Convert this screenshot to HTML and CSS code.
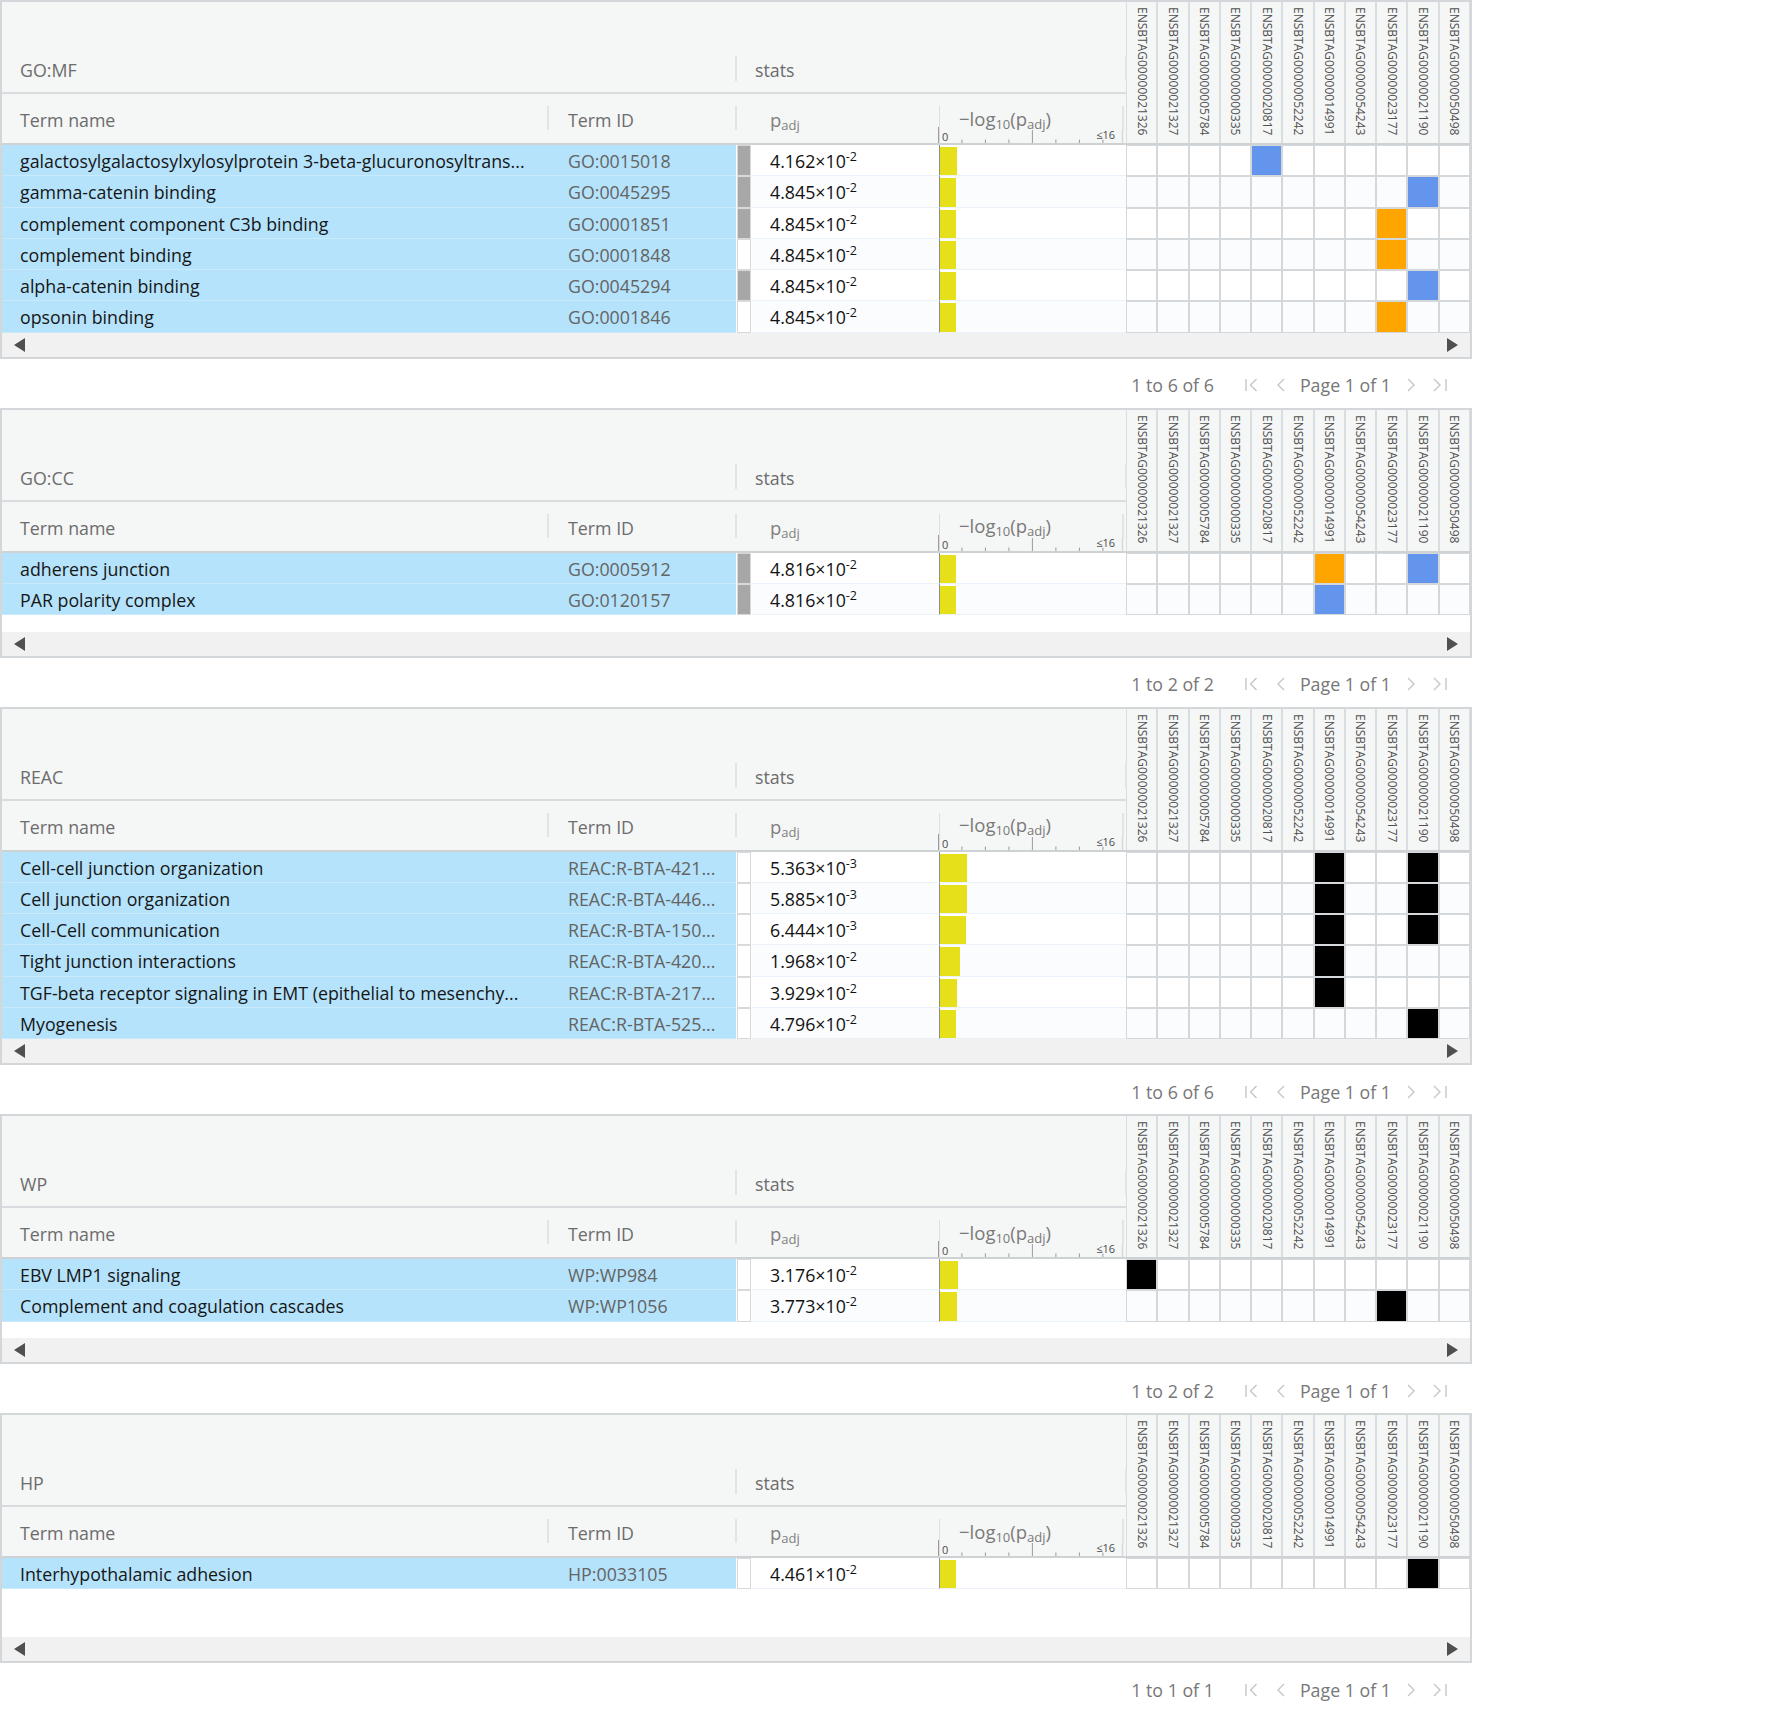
FILE: index.html
```html
<!DOCTYPE html>
<html lang="en">
<head>
<meta charset="utf-8">
<title>g:Profiler results</title>
<link rel="stylesheet" href="styles.css">
</head>
<body>
<div class="page">

<!-- ===================== GO:MF ===================== -->
<section class="block">
  <div class="grid">
    <div class="head">
      <div class="head-left">
        <div class="group-row">
          <div class="grp grp-src">GO:MF</div>
          <div class="grp grp-stats">stats</div>
        </div>
        <div class="col-row">
          <div class="hc hc-name">Term name</div>
          <div class="hc hc-id">Term ID</div>
          <div class="hc hc-blank"></div>
          <div class="hc hc-padj"><span>p<sub>adj</sub></span></div>
          <div class="hc hc-bar"><span>&minus;log<sub>10</sub>(p<sub>adj</sub>)</span>
            <svg class="axis" width="188" height="16" viewBox="0 0 188 16"><path d="M0.5 0V16M23.9 12.5V16M47.4 12.5V16M70.9 12.5V16M94.4 3V16M117.9 12.5V16M141.4 12.5V16M164.9 12.5V16" stroke="#9b9b9b" stroke-width="1"/><path d="M184.5 3V16" stroke="#d6d8da" stroke-width="1.5"/><text x="4" y="14" class="axis-t">0</text><text x="177" y="12" text-anchor="end" class="axis-t">&le;16</text></svg>
          </div>
        </div>
      </div>
      <div class="gene-heads">
        <div class="gh"><span>ENSBTAG00000021326</span></div>
        <div class="gh"><span>ENSBTAG00000021327</span></div>
        <div class="gh"><span>ENSBTAG00000005784</span></div>
        <div class="gh"><span>ENSBTAG00000000335</span></div>
        <div class="gh"><span>ENSBTAG00000020817</span></div>
        <div class="gh"><span>ENSBTAG00000052242</span></div>
        <div class="gh"><span>ENSBTAG00000014991</span></div>
        <div class="gh"><span>ENSBTAG00000054243</span></div>
        <div class="gh"><span>ENSBTAG00000023177</span></div>
        <div class="gh"><span>ENSBTAG00000021190</span></div>
        <div class="gh"><span>ENSBTAG00000050498</span></div>
      </div>
    </div>
    <div class="body">
      <div class="row">
        <div class="c-name">galactosylgalactosylxylosylprotein 3-beta-glucuronosyltrans...</div>
        <div class="c-id">GO:0015018</div>
        <div class="c-src"><span class="src on"></span></div>
        <div class="c-padj">4.162×10<sup>-2</sup></div>
        <div class="c-bar"><span class="bar" style="width:16.6px"></span></div>
        <div class="genes"><span></span><span></span><span></span><span></span><span class="b"></span><span></span><span></span><span></span><span></span><span></span><span></span></div>
      </div>
      <div class="row">
        <div class="c-name">gamma-catenin binding</div>
        <div class="c-id">GO:0045295</div>
        <div class="c-src"><span class="src on"></span></div>
        <div class="c-padj">4.845×10<sup>-2</sup></div>
        <div class="c-bar"><span class="bar" style="width:15.9px"></span></div>
        <div class="genes"><span></span><span></span><span></span><span></span><span></span><span></span><span></span><span></span><span></span><span class="b"></span><span></span></div>
      </div>
      <div class="row">
        <div class="c-name">complement component C3b binding</div>
        <div class="c-id">GO:0001851</div>
        <div class="c-src"><span class="src on"></span></div>
        <div class="c-padj">4.845×10<sup>-2</sup></div>
        <div class="c-bar"><span class="bar" style="width:15.9px"></span></div>
        <div class="genes"><span></span><span></span><span></span><span></span><span></span><span></span><span></span><span></span><span class="o"></span><span></span><span></span></div>
      </div>
      <div class="row">
        <div class="c-name">complement binding</div>
        <div class="c-id">GO:0001848</div>
        <div class="c-src"><span class="src"></span></div>
        <div class="c-padj">4.845×10<sup>-2</sup></div>
        <div class="c-bar"><span class="bar" style="width:15.9px"></span></div>
        <div class="genes"><span></span><span></span><span></span><span></span><span></span><span></span><span></span><span></span><span class="o"></span><span></span><span></span></div>
      </div>
      <div class="row">
        <div class="c-name">alpha-catenin binding</div>
        <div class="c-id">GO:0045294</div>
        <div class="c-src"><span class="src on"></span></div>
        <div class="c-padj">4.845×10<sup>-2</sup></div>
        <div class="c-bar"><span class="bar" style="width:15.9px"></span></div>
        <div class="genes"><span></span><span></span><span></span><span></span><span></span><span></span><span></span><span></span><span></span><span class="b"></span><span></span></div>
      </div>
      <div class="row">
        <div class="c-name">opsonin binding</div>
        <div class="c-id">GO:0001846</div>
        <div class="c-src"><span class="src"></span></div>
        <div class="c-padj">4.845×10<sup>-2</sup></div>
        <div class="c-bar"><span class="bar" style="width:15.9px"></span></div>
        <div class="genes"><span></span><span></span><span></span><span></span><span></span><span></span><span></span><span></span><span class="o"></span><span></span><span></span></div>
      </div>
    </div>
    <div class="hscroll"><span class="arr-l"></span><span class="arr-r"></span></div>
  </div>
  <div class="pager">
    <span class="count">1 to 6 of 6</span>
    <svg class="ic ic-first" width="13" height="14" viewBox="0 0 13 14"><path d="M1 1V13M11.5 1L5.5 7L11.5 13" fill="none" stroke="#c6c6c6" stroke-width="1.4"/></svg>
    <svg class="ic ic-prev" width="8" height="14" viewBox="0 0 8 14"><path d="M7 1L1 7L7 13" fill="none" stroke="#c6c6c6" stroke-width="1.4"/></svg>
    <span class="pages">Page 1 of 1</span>
    <svg class="ic ic-next" width="8" height="14" viewBox="0 0 8 14"><path d="M1 1L7 7L1 13" fill="none" stroke="#c6c6c6" stroke-width="1.4"/></svg>
    <svg class="ic ic-last" width="14" height="14" viewBox="0 0 14 14"><path d="M1 1L7 7L1 13M13 1V13" fill="none" stroke="#c6c6c6" stroke-width="1.4"/></svg>
  </div>
</section>

<!-- ===================== GO:CC ===================== -->
<section class="block">
  <div class="grid">
    <div class="head">
      <div class="head-left">
        <div class="group-row">
          <div class="grp grp-src">GO:CC</div>
          <div class="grp grp-stats">stats</div>
        </div>
        <div class="col-row">
          <div class="hc hc-name">Term name</div>
          <div class="hc hc-id">Term ID</div>
          <div class="hc hc-blank"></div>
          <div class="hc hc-padj"><span>p<sub>adj</sub></span></div>
          <div class="hc hc-bar"><span>&minus;log<sub>10</sub>(p<sub>adj</sub>)</span>
            <svg class="axis" width="188" height="16" viewBox="0 0 188 16"><path d="M0.5 0V16M23.9 12.5V16M47.4 12.5V16M70.9 12.5V16M94.4 3V16M117.9 12.5V16M141.4 12.5V16M164.9 12.5V16" stroke="#9b9b9b" stroke-width="1"/><path d="M184.5 3V16" stroke="#d6d8da" stroke-width="1.5"/><text x="4" y="14" class="axis-t">0</text><text x="177" y="12" text-anchor="end" class="axis-t">&le;16</text></svg>
          </div>
        </div>
      </div>
      <div class="gene-heads">
        <div class="gh"><span>ENSBTAG00000021326</span></div>
        <div class="gh"><span>ENSBTAG00000021327</span></div>
        <div class="gh"><span>ENSBTAG00000005784</span></div>
        <div class="gh"><span>ENSBTAG00000000335</span></div>
        <div class="gh"><span>ENSBTAG00000020817</span></div>
        <div class="gh"><span>ENSBTAG00000052242</span></div>
        <div class="gh"><span>ENSBTAG00000014991</span></div>
        <div class="gh"><span>ENSBTAG00000054243</span></div>
        <div class="gh"><span>ENSBTAG00000023177</span></div>
        <div class="gh"><span>ENSBTAG00000021190</span></div>
        <div class="gh"><span>ENSBTAG00000050498</span></div>
      </div>
    </div>
    <div class="body">
      <div class="row">
        <div class="c-name">adherens junction</div>
        <div class="c-id">GO:0005912</div>
        <div class="c-src"><span class="src on"></span></div>
        <div class="c-padj">4.816×10<sup>-2</sup></div>
        <div class="c-bar"><span class="bar" style="width:15.9px"></span></div>
        <div class="genes"><span></span><span></span><span></span><span></span><span></span><span></span><span class="o"></span><span></span><span></span><span class="b"></span><span></span></div>
      </div>
      <div class="row">
        <div class="c-name">PAR polarity complex</div>
        <div class="c-id">GO:0120157</div>
        <div class="c-src"><span class="src on"></span></div>
        <div class="c-padj">4.816×10<sup>-2</sup></div>
        <div class="c-bar"><span class="bar" style="width:15.9px"></span></div>
        <div class="genes"><span></span><span></span><span></span><span></span><span></span><span></span><span class="b"></span><span></span><span></span><span></span><span></span></div>
      </div>
    </div>
    <div class="hscroll"><span class="arr-l"></span><span class="arr-r"></span></div>
  </div>
  <div class="pager">
    <span class="count">1 to 2 of 2</span>
    <svg class="ic ic-first" width="13" height="14" viewBox="0 0 13 14"><path d="M1 1V13M11.5 1L5.5 7L11.5 13" fill="none" stroke="#c6c6c6" stroke-width="1.4"/></svg>
    <svg class="ic ic-prev" width="8" height="14" viewBox="0 0 8 14"><path d="M7 1L1 7L7 13" fill="none" stroke="#c6c6c6" stroke-width="1.4"/></svg>
    <span class="pages">Page 1 of 1</span>
    <svg class="ic ic-next" width="8" height="14" viewBox="0 0 8 14"><path d="M1 1L7 7L1 13" fill="none" stroke="#c6c6c6" stroke-width="1.4"/></svg>
    <svg class="ic ic-last" width="14" height="14" viewBox="0 0 14 14"><path d="M1 1L7 7L1 13M13 1V13" fill="none" stroke="#c6c6c6" stroke-width="1.4"/></svg>
  </div>
</section>

<!-- ===================== REAC ===================== -->
<section class="block">
  <div class="grid">
    <div class="head">
      <div class="head-left">
        <div class="group-row">
          <div class="grp grp-src">REAC</div>
          <div class="grp grp-stats">stats</div>
        </div>
        <div class="col-row">
          <div class="hc hc-name">Term name</div>
          <div class="hc hc-id">Term ID</div>
          <div class="hc hc-blank"></div>
          <div class="hc hc-padj"><span>p<sub>adj</sub></span></div>
          <div class="hc hc-bar"><span>&minus;log<sub>10</sub>(p<sub>adj</sub>)</span>
            <svg class="axis" width="188" height="16" viewBox="0 0 188 16"><path d="M0.5 0V16M23.9 12.5V16M47.4 12.5V16M70.9 12.5V16M94.4 3V16M117.9 12.5V16M141.4 12.5V16M164.9 12.5V16" stroke="#9b9b9b" stroke-width="1"/><path d="M184.5 3V16" stroke="#d6d8da" stroke-width="1.5"/><text x="4" y="14" class="axis-t">0</text><text x="177" y="12" text-anchor="end" class="axis-t">&le;16</text></svg>
          </div>
        </div>
      </div>
      <div class="gene-heads">
        <div class="gh"><span>ENSBTAG00000021326</span></div>
        <div class="gh"><span>ENSBTAG00000021327</span></div>
        <div class="gh"><span>ENSBTAG00000005784</span></div>
        <div class="gh"><span>ENSBTAG00000000335</span></div>
        <div class="gh"><span>ENSBTAG00000020817</span></div>
        <div class="gh"><span>ENSBTAG00000052242</span></div>
        <div class="gh"><span>ENSBTAG00000014991</span></div>
        <div class="gh"><span>ENSBTAG00000054243</span></div>
        <div class="gh"><span>ENSBTAG00000023177</span></div>
        <div class="gh"><span>ENSBTAG00000021190</span></div>
        <div class="gh"><span>ENSBTAG00000050498</span></div>
      </div>
    </div>
    <div class="body">
      <div class="row">
        <div class="c-name">Cell-cell junction organization</div>
        <div class="c-id">REAC:R-BTA-421...</div>
        <div class="c-src"><span class="src"></span></div>
        <div class="c-padj">5.363×10<sup>-3</sup></div>
        <div class="c-bar"><span class="bar" style="width:27px"></span></div>
        <div class="genes"><span></span><span></span><span></span><span></span><span></span><span></span><span class="k"></span><span></span><span></span><span class="k"></span><span></span></div>
      </div>
      <div class="row">
        <div class="c-name">Cell junction organization</div>
        <div class="c-id">REAC:R-BTA-446...</div>
        <div class="c-src"><span class="src"></span></div>
        <div class="c-padj">5.885×10<sup>-3</sup></div>
        <div class="c-bar"><span class="bar" style="width:26.6px"></span></div>
        <div class="genes"><span></span><span></span><span></span><span></span><span></span><span></span><span class="k"></span><span></span><span></span><span class="k"></span><span></span></div>
      </div>
      <div class="row">
        <div class="c-name">Cell-Cell communication</div>
        <div class="c-id">REAC:R-BTA-150...</div>
        <div class="c-src"><span class="src"></span></div>
        <div class="c-padj">6.444×10<sup>-3</sup></div>
        <div class="c-bar"><span class="bar" style="width:26.1px"></span></div>
        <div class="genes"><span></span><span></span><span></span><span></span><span></span><span></span><span class="k"></span><span></span><span></span><span class="k"></span><span></span></div>
      </div>
      <div class="row">
        <div class="c-name">Tight junction interactions</div>
        <div class="c-id">REAC:R-BTA-420...</div>
        <div class="c-src"><span class="src"></span></div>
        <div class="c-padj">1.968×10<sup>-2</sup></div>
        <div class="c-bar"><span class="bar" style="width:20.4px"></span></div>
        <div class="genes"><span></span><span></span><span></span><span></span><span></span><span></span><span class="k"></span><span></span><span></span><span></span><span></span></div>
      </div>
      <div class="row">
        <div class="c-name">TGF-beta receptor signaling in EMT (epithelial to mesenchy...</div>
        <div class="c-id">REAC:R-BTA-217...</div>
        <div class="c-src"><span class="src"></span></div>
        <div class="c-padj">3.929×10<sup>-2</sup></div>
        <div class="c-bar"><span class="bar" style="width:16.9px"></span></div>
        <div class="genes"><span></span><span></span><span></span><span></span><span></span><span></span><span class="k"></span><span></span><span></span><span></span><span></span></div>
      </div>
      <div class="row">
        <div class="c-name">Myogenesis</div>
        <div class="c-id">REAC:R-BTA-525...</div>
        <div class="c-src"><span class="src"></span></div>
        <div class="c-padj">4.796×10<sup>-2</sup></div>
        <div class="c-bar"><span class="bar" style="width:15.9px"></span></div>
        <div class="genes"><span></span><span></span><span></span><span></span><span></span><span></span><span></span><span></span><span></span><span class="k"></span><span></span></div>
      </div>
    </div>
    <div class="hscroll"><span class="arr-l"></span><span class="arr-r"></span></div>
  </div>
  <div class="pager">
    <span class="count">1 to 6 of 6</span>
    <svg class="ic ic-first" width="13" height="14" viewBox="0 0 13 14"><path d="M1 1V13M11.5 1L5.5 7L11.5 13" fill="none" stroke="#c6c6c6" stroke-width="1.4"/></svg>
    <svg class="ic ic-prev" width="8" height="14" viewBox="0 0 8 14"><path d="M7 1L1 7L7 13" fill="none" stroke="#c6c6c6" stroke-width="1.4"/></svg>
    <span class="pages">Page 1 of 1</span>
    <svg class="ic ic-next" width="8" height="14" viewBox="0 0 8 14"><path d="M1 1L7 7L1 13" fill="none" stroke="#c6c6c6" stroke-width="1.4"/></svg>
    <svg class="ic ic-last" width="14" height="14" viewBox="0 0 14 14"><path d="M1 1L7 7L1 13M13 1V13" fill="none" stroke="#c6c6c6" stroke-width="1.4"/></svg>
  </div>
</section>

<!-- ===================== WP ===================== -->
<section class="block">
  <div class="grid">
    <div class="head">
      <div class="head-left">
        <div class="group-row">
          <div class="grp grp-src">WP</div>
          <div class="grp grp-stats">stats</div>
        </div>
        <div class="col-row">
          <div class="hc hc-name">Term name</div>
          <div class="hc hc-id">Term ID</div>
          <div class="hc hc-blank"></div>
          <div class="hc hc-padj"><span>p<sub>adj</sub></span></div>
          <div class="hc hc-bar"><span>&minus;log<sub>10</sub>(p<sub>adj</sub>)</span>
            <svg class="axis" width="188" height="16" viewBox="0 0 188 16"><path d="M0.5 0V16M23.9 12.5V16M47.4 12.5V16M70.9 12.5V16M94.4 3V16M117.9 12.5V16M141.4 12.5V16M164.9 12.5V16" stroke="#9b9b9b" stroke-width="1"/><path d="M184.5 3V16" stroke="#d6d8da" stroke-width="1.5"/><text x="4" y="14" class="axis-t">0</text><text x="177" y="12" text-anchor="end" class="axis-t">&le;16</text></svg>
          </div>
        </div>
      </div>
      <div class="gene-heads">
        <div class="gh"><span>ENSBTAG00000021326</span></div>
        <div class="gh"><span>ENSBTAG00000021327</span></div>
        <div class="gh"><span>ENSBTAG00000005784</span></div>
        <div class="gh"><span>ENSBTAG00000000335</span></div>
        <div class="gh"><span>ENSBTAG00000020817</span></div>
        <div class="gh"><span>ENSBTAG00000052242</span></div>
        <div class="gh"><span>ENSBTAG00000014991</span></div>
        <div class="gh"><span>ENSBTAG00000054243</span></div>
        <div class="gh"><span>ENSBTAG00000023177</span></div>
        <div class="gh"><span>ENSBTAG00000021190</span></div>
        <div class="gh"><span>ENSBTAG00000050498</span></div>
      </div>
    </div>
    <div class="body">
      <div class="row">
        <div class="c-name">EBV LMP1 signaling</div>
        <div class="c-id">WP:WP984</div>
        <div class="c-src"><span class="src"></span></div>
        <div class="c-padj">3.176×10<sup>-2</sup></div>
        <div class="c-bar"><span class="bar" style="width:18px"></span></div>
        <div class="genes"><span class="k"></span><span></span><span></span><span></span><span></span><span></span><span></span><span></span><span></span><span></span><span></span></div>
      </div>
      <div class="row">
        <div class="c-name">Complement and coagulation cascades</div>
        <div class="c-id">WP:WP1056</div>
        <div class="c-src"><span class="src"></span></div>
        <div class="c-padj">3.773×10<sup>-2</sup></div>
        <div class="c-bar"><span class="bar" style="width:17.1px"></span></div>
        <div class="genes"><span></span><span></span><span></span><span></span><span></span><span></span><span></span><span></span><span class="k"></span><span></span><span></span></div>
      </div>
    </div>
    <div class="hscroll"><span class="arr-l"></span><span class="arr-r"></span></div>
  </div>
  <div class="pager">
    <span class="count">1 to 2 of 2</span>
    <svg class="ic ic-first" width="13" height="14" viewBox="0 0 13 14"><path d="M1 1V13M11.5 1L5.5 7L11.5 13" fill="none" stroke="#c6c6c6" stroke-width="1.4"/></svg>
    <svg class="ic ic-prev" width="8" height="14" viewBox="0 0 8 14"><path d="M7 1L1 7L7 13" fill="none" stroke="#c6c6c6" stroke-width="1.4"/></svg>
    <span class="pages">Page 1 of 1</span>
    <svg class="ic ic-next" width="8" height="14" viewBox="0 0 8 14"><path d="M1 1L7 7L1 13" fill="none" stroke="#c6c6c6" stroke-width="1.4"/></svg>
    <svg class="ic ic-last" width="14" height="14" viewBox="0 0 14 14"><path d="M1 1L7 7L1 13M13 1V13" fill="none" stroke="#c6c6c6" stroke-width="1.4"/></svg>
  </div>
</section>

<!-- ===================== HP ===================== -->
<section class="block">
  <div class="grid">
    <div class="head">
      <div class="head-left">
        <div class="group-row">
          <div class="grp grp-src">HP</div>
          <div class="grp grp-stats">stats</div>
        </div>
        <div class="col-row">
          <div class="hc hc-name">Term name</div>
          <div class="hc hc-id">Term ID</div>
          <div class="hc hc-blank"></div>
          <div class="hc hc-padj"><span>p<sub>adj</sub></span></div>
          <div class="hc hc-bar"><span>&minus;log<sub>10</sub>(p<sub>adj</sub>)</span>
            <svg class="axis" width="188" height="16" viewBox="0 0 188 16"><path d="M0.5 0V16M23.9 12.5V16M47.4 12.5V16M70.9 12.5V16M94.4 3V16M117.9 12.5V16M141.4 12.5V16M164.9 12.5V16" stroke="#9b9b9b" stroke-width="1"/><path d="M184.5 3V16" stroke="#d6d8da" stroke-width="1.5"/><text x="4" y="14" class="axis-t">0</text><text x="177" y="12" text-anchor="end" class="axis-t">&le;16</text></svg>
          </div>
        </div>
      </div>
      <div class="gene-heads">
        <div class="gh"><span>ENSBTAG00000021326</span></div>
        <div class="gh"><span>ENSBTAG00000021327</span></div>
        <div class="gh"><span>ENSBTAG00000005784</span></div>
        <div class="gh"><span>ENSBTAG00000000335</span></div>
        <div class="gh"><span>ENSBTAG00000020817</span></div>
        <div class="gh"><span>ENSBTAG00000052242</span></div>
        <div class="gh"><span>ENSBTAG00000014991</span></div>
        <div class="gh"><span>ENSBTAG00000054243</span></div>
        <div class="gh"><span>ENSBTAG00000023177</span></div>
        <div class="gh"><span>ENSBTAG00000021190</span></div>
        <div class="gh"><span>ENSBTAG00000050498</span></div>
      </div>
    </div>
    <div class="body">
      <div class="row">
        <div class="c-name">Interhypothalamic adhesion</div>
        <div class="c-id">HP:0033105</div>
        <div class="c-src"><span class="src"></span></div>
        <div class="c-padj">4.461×10<sup>-2</sup></div>
        <div class="c-bar"><span class="bar" style="width:16.3px"></span></div>
        <div class="genes"><span></span><span></span><span></span><span></span><span></span><span></span><span></span><span></span><span></span><span class="k"></span><span></span></div>
      </div>
    </div>
    <div class="hscroll"><span class="arr-l"></span><span class="arr-r"></span></div>
  </div>
  <div class="pager">
    <span class="count">1 to 1 of 1</span>
    <svg class="ic ic-first" width="13" height="14" viewBox="0 0 13 14"><path d="M1 1V13M11.5 1L5.5 7L11.5 13" fill="none" stroke="#c6c6c6" stroke-width="1.4"/></svg>
    <svg class="ic ic-prev" width="8" height="14" viewBox="0 0 8 14"><path d="M7 1L1 7L7 13" fill="none" stroke="#c6c6c6" stroke-width="1.4"/></svg>
    <span class="pages">Page 1 of 1</span>
    <svg class="ic ic-next" width="8" height="14" viewBox="0 0 8 14"><path d="M1 1L7 7L1 13" fill="none" stroke="#c6c6c6" stroke-width="1.4"/></svg>
    <svg class="ic ic-last" width="14" height="14" viewBox="0 0 14 14"><path d="M1 1L7 7L1 13M13 1V13" fill="none" stroke="#c6c6c6" stroke-width="1.4"/></svg>
  </div>
</section>

</div>
</body>
</html>
```

FILE: styles.css
```css
* { box-sizing: border-box; }

html, body {
  margin: 0;
  padding: 0;
  background: #ffffff;
}

body {
  font-family: "Open Sans", "Noto Sans", "Liberation Sans", sans-serif;
  font-size: 17.8px;
  color: #1c1c1c;
}

.page {
  width: 1472px;
}

/* ---------- grid frame ---------- */
.grid {
  border: 2px solid #d4d7d9;
  background: #ffffff;
}

.head {
  display: flex;
  height: 143px;
  background: #f5f6f6;
  border-bottom: 2px solid #cfd2d4;
}

.head-left {
  width: 1124px;
  display: flex;
  flex-direction: column;
}

.group-row {
  display: flex;
  height: 92px;
  border-bottom: 2px solid #d9dcde;
}

.grp {
  position: relative;
  display: flex;
  align-items: flex-end;
  padding: 0 0 10px 18px;
  line-height: 24px;
  color: #6c6c6c;
}

.grp::after {
  content: "";
  position: absolute;
  right: -1px;
  bottom: 11px;
  width: 2px;
  height: 25px;
  background: #e1e3e4;
}

.grp-src { width: 734px; }
.grp-stats { width: 390px; padding-left: 19px; }

.col-row {
  display: flex;
  height: 49px;
}

.hc {
  position: relative;
  display: flex;
  align-items: center;
  padding-top: 3px;
  line-height: 24px;
  color: #6c6c6c;
  white-space: nowrap;
}

.hc::after {
  content: "";
  position: absolute;
  right: -1px;
  top: 12px;
  width: 2px;
  height: 24px;
  background: #e1e3e4;
}

.hc-name { width: 546px; padding-left: 18px; }
.hc-id { width: 188px; padding-left: 20px; }
.hc-blank { width: 16px; }
.hc-blank::after { display: none; }
.hc-padj { width: 187px; padding-left: 18px; color: #808080; font-size: 18.5px; }
.hc-padj::after { right: -1px; width: 1px; height: 37px; background: #dcdedf; }
.hc-bar { width: 187px; padding-left: 20px; padding-top: 0; color: #7a7a7a; font-size: 18.5px; }
.hc-bar::after { right: 2px; top: 12px; }

.hc sub {
  font-size: 13px;
  line-height: 0;
  vertical-align: -3px;
}

.axis {
  position: absolute;
  left: -1px;
  bottom: 0;
}

.axis-t {
  font-family: "Open Sans", "Noto Sans", sans-serif;
  font-size: 11px;
  fill: #4a4a4a;
}

/* ---------- gene headers ---------- */
.gene-heads {
  display: flex;
}

.gh {
  width: 31.25px;
  height: 141px;
  border-left: 1px solid #dadddf;
  border-right: 1px solid #dadddf;
  display: flex;
  justify-content: center;
  padding-top: 5px;
}

.gh span {
  writing-mode: vertical-rl;
  font-size: 12px;
  line-height: 14px;
  color: #505050;
}

/* ---------- body rows ---------- */
.body {
  min-height: 79px;
  background: #ffffff;
}

.row {
  display: flex;
  height: 31.25px;
  background: #ffffff;
}

.row:nth-child(even) {
  background: #fbfcfe;
}

.c-name,
.c-id {
  background: #b5e3fb;
  border-bottom: 1px solid #c8eafc;
  padding-top: 2px;
  line-height: 28px;
  white-space: nowrap;
  overflow: hidden;
}

.c-name { width: 546px; padding-left: 18px; color: #161616; }
.c-id { width: 188px; padding-left: 20px; color: #646464; }

.c-src {
  width: 16px;
  padding-left: 1px;
}

.src {
  display: block;
  width: 14px;
  height: 100%;
  border: 1px solid #d7d9db;
  background: #ffffff;
}

.src.on { background: #a7a7a7; }

.c-padj {
  width: 187px;
  padding-left: 18px;
  padding-top: 2px;
  line-height: 28px;
  color: #121212;
  white-space: nowrap;
  border-bottom: 1px solid #ebf2f9;
}

.c-padj sup {
  font-size: 12.5px;
  line-height: 0;
  vertical-align: 7px;
}

.c-bar {
  width: 187px;
  border-left: 1px solid #8e8e8e;
  border-bottom: 1px solid #ebf2f9;
  padding: 2px 0 0 0;
}

.bar {
  display: block;
  height: 100%;
  background: #e6e01b;
}

.genes {
  display: flex;
}

.genes span {
  width: 31.25px;
  height: 31.25px;
  border: 1px solid #d5d8da;
}

.genes .b { background: #6495ed; }
.genes .o { background: #ffa500; }
.genes .k { background: #000000; }

/* ---------- horizontal scrollbar ---------- */
.hscroll {
  height: 24px;
  background: #f1f1f1;
  display: flex;
  align-items: center;
  justify-content: space-between;
  padding: 0 12px;
}

.arr-l,
.arr-r {
  width: 0;
  height: 0;
  border-top: 7px solid transparent;
  border-bottom: 7px solid transparent;
}

.arr-l { border-right: 11px solid #505050; }
.arr-r { border-left: 11px solid #505050; }

/* ---------- pager ---------- */
.pager {
  height: 49px;
  display: flex;
  align-items: center;
  justify-content: flex-end;
  padding: 4px 25px 0 0;
  color: #777777;
  line-height: 24px;
}

.count { margin-right: 31px; }
.ic { display: block; }
.ic-first { margin-right: 19px; }
.ic-prev { margin-right: 15px; }
.pages { margin-right: 16px; }
.ic-next { margin-right: 18px; }
```
